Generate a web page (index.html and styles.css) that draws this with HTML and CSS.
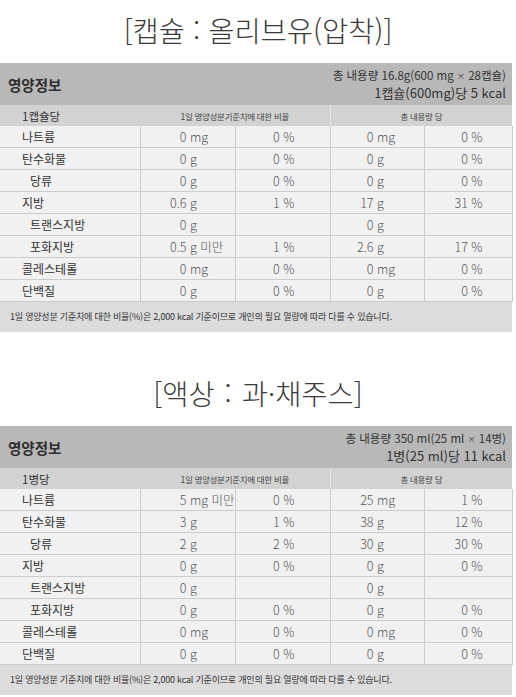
FILE: index.html
```html
<!DOCTYPE html>
<html lang="ko">
<head>
    <meta charset="UTF-8">
    <meta name="viewport" content="width=device-width, initial-scale=1.0">
    <title>영양정보</title>
    <link rel="stylesheet" href="styles.css">
</head>
<body>
    <!-- 캡슐 -->
    <div class="section first">
        <h2 class="title">[캡슐 : 올리브유(압착)]</h2>
        <div class="head">
            <div class="head-name">영양정보</div>
            <div class="head-info">
                <div class="total">총 내용량 16.8g(600 mg <span class="x">×</span> 28캡슐)</div>
                <div class="kcal">1캡슐(600mg)당 5 kcal</div>
            </div>
        </div>
        <table class="nutri">
            <colgroup>
                <col class="c1"><col class="c2"><col class="c3"><col class="c4"><col class="c5">
            </colgroup>
            <tr class="colhead">
                <td class="per">1캡슐당</td>
                <td colspan="2" class="small">1일 영양성분기준치에 대한 비율</td>
                <td colspan="2" class="small split">총 내용량 당</td>
            </tr>
            <tr><td class="name">나트륨</td><td class="v"><span class="n">0</span> mg</td><td class="p">0 %</td><td class="v t"><span class="n">0</span> mg</td><td class="p t">0 %</td></tr>
            <tr><td class="name">탄수화물</td><td class="v"><span class="n">0</span> g</td><td class="p">0 %</td><td class="v t"><span class="n">0</span> g</td><td class="p t">0 %</td></tr>
            <tr><td class="name sub">당류</td><td class="v"><span class="n">0</span> g</td><td class="p">0 %</td><td class="v t"><span class="n">0</span> g</td><td class="p t">0 %</td></tr>
            <tr><td class="name">지방</td><td class="v"><span class="n">0.6</span> g</td><td class="p">1 %</td><td class="v t"><span class="n">17</span> g</td><td class="p t">31 %</td></tr>
            <tr><td class="name sub">트랜스지방</td><td class="v"><span class="n">0</span> g</td><td class="p"></td><td class="v t"><span class="n">0</span> g</td><td class="p t"></td></tr>
            <tr><td class="name sub">포화지방</td><td class="v"><span class="n">0.5</span> g 미만</td><td class="p">1 %</td><td class="v t"><span class="n">2.6</span> g</td><td class="p t">17 %</td></tr>
            <tr><td class="name">콜레스테롤</td><td class="v"><span class="n">0</span> mg</td><td class="p">0 %</td><td class="v t"><span class="n">0</span> mg</td><td class="p t">0 %</td></tr>
            <tr><td class="name">단백질</td><td class="v"><span class="n">0</span> g</td><td class="p">0 %</td><td class="v t"><span class="n">0</span> g</td><td class="p t">0 %</td></tr>
        </table>
        <div class="note">1일 영양성분 기준치에 대한 비율(%)은 2,000 kcal 기준이므로 개인의 필요 열량에 따라 다를 수 있습니다.</div>
    </div>

    <!-- 액상 -->
    <div class="section second">
        <h2 class="title">[액상 : 과·채주스]</h2>
        <div class="head">
            <div class="head-name">영양정보</div>
            <div class="head-info">
                <div class="total">총 내용량 350 ml(25 ml <span class="x">×</span> 14병)</div>
                <div class="kcal">1병(25 ml)당 11 kcal</div>
            </div>
        </div>
        <table class="nutri">
            <colgroup>
                <col class="c1"><col class="c2"><col class="c3"><col class="c4"><col class="c5">
            </colgroup>
            <tr class="colhead">
                <td class="per">1병당</td>
                <td colspan="2" class="small">1일 영양성분기준치에 대한 비율</td>
                <td colspan="2" class="small split">총 내용량 당</td>
            </tr>
            <tr><td class="name">나트륨</td><td class="v"><span class="n">5</span> mg 미만</td><td class="p">0 %</td><td class="v t"><span class="n">25</span> mg</td><td class="p t">1 %</td></tr>
            <tr><td class="name">탄수화물</td><td class="v"><span class="n">3</span> g</td><td class="p">1 %</td><td class="v t"><span class="n">38</span> g</td><td class="p t">12 %</td></tr>
            <tr><td class="name sub">당류</td><td class="v"><span class="n">2</span> g</td><td class="p">2 %</td><td class="v t"><span class="n">30</span> g</td><td class="p t">30 %</td></tr>
            <tr><td class="name">지방</td><td class="v"><span class="n">0</span> g</td><td class="p">0 %</td><td class="v t"><span class="n">0</span> g</td><td class="p t">0 %</td></tr>
            <tr><td class="name sub">트랜스지방</td><td class="v"><span class="n">0</span> g</td><td class="p"></td><td class="v t"><span class="n">0</span> g</td><td class="p t"></td></tr>
            <tr><td class="name sub">포화지방</td><td class="v"><span class="n">0</span> g</td><td class="p">0 %</td><td class="v t"><span class="n">0</span> g</td><td class="p t">0 %</td></tr>
            <tr><td class="name">콜레스테롤</td><td class="v"><span class="n">0</span> mg</td><td class="p">0 %</td><td class="v t"><span class="n">0</span> mg</td><td class="p t">0 %</td></tr>
            <tr><td class="name">단백질</td><td class="v"><span class="n">0</span> g</td><td class="p">0 %</td><td class="v t"><span class="n">0</span> g</td><td class="p t">0 %</td></tr>
        </table>
        <div class="note">1일 영양성분 기준치에 대한 비율(%)은 2,000 kcal 기준이므로 개인의 필요 열량에 따라 다를 수 있습니다.</div>
    </div>
</body>
</html>
```

FILE: styles.css
```css
body {
    margin: 0;
    background: #fff;
    color: #333;
    font-family: "Noto Sans CJK KR", "Noto Sans", sans-serif;
}
.section {
    width: 512px;
}
.first {
    padding-top: 12px;
}
.second {
    margin-top: 43px;
}
.title {
    margin: 0 0 15px;
    width: 516px;
    height: 36px;
    line-height: 36px;
    text-align: center;
    font-size: 28.5px;
    font-weight: 300;
    color: #3a3a3a;
}
.second .title {
    word-spacing: 2px;
}
.head {
    display: flex;
    justify-content: space-between;
    align-items: center;
    height: 42px;
    background-color: #b8b8b8;
    padding: 0 6px 0 8px;
}
.head-name {
    font-size: 14.5px;
    font-weight: 700;
    color: #2e2e2e;
}
.head-info {
    text-align: right;
    color: #333;
}
.total {
    font-size: 11.5px;
    line-height: 16px;
}
.total .x {
    font-size: 8px;
    vertical-align: 1px;
}
.kcal {
    font-size: 13px;
    line-height: 18px;
}
.nutri {
    width: 512px;
    border-collapse: collapse;
    table-layout: fixed;
    font-size: 12.5px;
}
.c1 { width: 140px; }
.c2 { width: 95px; }
.c3 { width: 95px; }
.c4 { width: 94px; }
.c5 { width: 88px; }
.nutri td {
    height: 21px;
    padding: 0;
    background-color: #f1f1f1;
    border: 1px solid #cccccc;
    border-top: none;
    white-space: nowrap;
}
.nutri td:first-child {
    border-left: none;
}
.colhead td {
    height: 21px;
    background-color: #d2d2d2;
    border: none;
}
.colhead .per {
    padding-left: 22px;
    font-size: 11.5px;
    color: #333;
}
.colhead .small {
    text-align: center;
    font-size: 8.5px;
    letter-spacing: -0.3px;
    color: #444;
}
.colhead .split {
    border-left: 1px solid #e6e6e6;
}
.name {
    padding-left: 22px !important;
    color: #333;
    font-size: 12px;
}
.name.sub {
    padding-left: 30px !important;
}
.v {
    color: #555;
    font-weight: 300;
}
.n {
    display: inline-block;
    width: 46px;
    text-align: right;
}
.v.t .n {
    width: 43px;
}
.p {
    text-align: right;
    padding-right: 35px !important;
    color: #555;
    font-weight: 300;
}
.p.t {
    padding-right: 29px !important;
}
.note {
    height: 30px;
    line-height: 30px;
    padding-left: 10px;
    background-color: #dcdcdc;
    font-size: 9px;
    letter-spacing: -0.2px;
    color: #333;
}
```
